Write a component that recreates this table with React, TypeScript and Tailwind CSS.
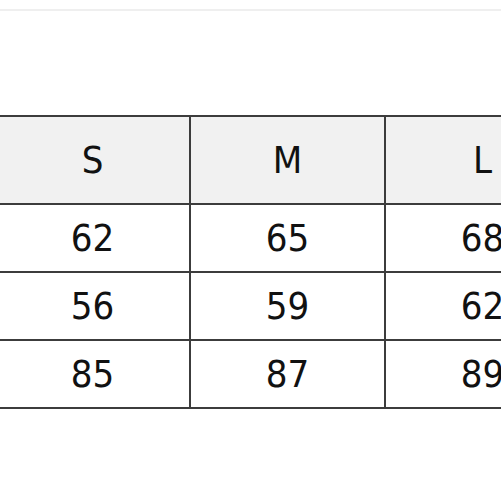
const SIZES = ["S", "M", "L"]
const ROWS = [
  ["62", "65", "68"],
  ["56", "59", "62"],
  ["85", "87", "89"],
]

export default function App() {
  return (
    <div className="w-[501px] h-[501px] overflow-hidden bg-white">
      <div className="h-[9px]" />
      <div className="h-[2px] bg-[#efefef]" />
      <div className="h-[104px]" />
      <table
        className="-ml-[6px] border-collapse table-fixed text-[38px] text-[#111] leading-none"
        style={{ fontFamily: '"DejaVu Sans Condensed", "DejaVu Sans", Verdana, sans-serif' }}
      >
        <thead>
          <tr className="bg-[#f1f1f1]">
            {SIZES.map((s) => (
              <th key={s} className="w-[195px] min-w-[195px] h-[88px] border-2 border-[#3c3c3c] text-center font-normal">
                {s}
              </th>
            ))}
          </tr>
        </thead>
        <tbody>
          {ROWS.map((row, i) => (
            <tr key={i}>
              {row.map((v, j) => (
                <td key={j} className="h-[68px] border-2 border-[#3c3c3c] text-center">
                  {v}
                </td>
              ))}
            </tr>
          ))}
        </tbody>
      </table>
    </div>
  )
}
